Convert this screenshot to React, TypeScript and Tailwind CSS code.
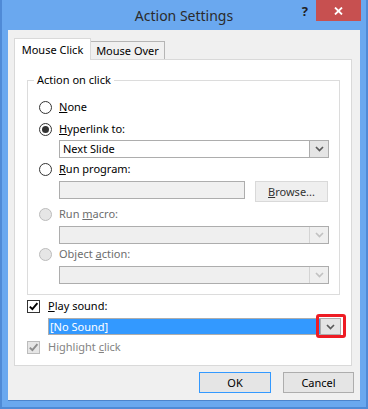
import React from 'react';

const Chevron = ({ color = '#5a5a5a' }: { color?: string }) => (
  <svg width="9" height="6" viewBox="0 0 9 6" fill="none">
    <path d="M1 1l3.5 3.5L8 1" stroke={color} strokeWidth="1.7" />
  </svg>
);

function Radio({ checked = false, disabled = false }: { checked?: boolean; disabled?: boolean }) {
  return (
    <div
      className={`w-[13px] h-[13px] rounded-full border flex items-center justify-center shrink-0 ${
        disabled ? 'border-[#bcbcbc] bg-[#e6e6e6]' : 'border-[#333333] bg-white'
      }`}
    >
      {checked && <div className="w-[7px] h-[7px] rounded-full bg-[#333333]" />}
    </div>
  );
}

function Checkbox({ disabled = false }: { disabled?: boolean }) {
  return (
    <div
      className={`w-[13px] h-[13px] border flex items-center justify-center shrink-0 ${
        disabled ? 'border-[#bcbcbc] bg-[#e6e6e6]' : 'border-[#333333] bg-white'
      }`}
    >
      <svg width="11" height="11" viewBox="0 0 11 11" fill="none">
        <path d="M1.8 5.6l2.6 2.6 5-6" stroke={disabled ? '#8d8d8d' : '#000'} strokeWidth="1.9" />
      </svg>
    </div>
  );
}

function Dropdown({ value = '', disabled = false }: { value?: string; disabled?: boolean }) {
  return (
    <div
      className={`ml-[31px] w-[270px] h-[18px] border border-[#adadad] flex ${
        disabled ? 'bg-[#efefef]' : 'bg-white'
      }`}
    >
      <div className="flex-1 pl-[3px] leading-[16px] text-black">{value}</div>
      <div
        className={`w-[19px] h-full border-l flex items-center justify-center ${
          disabled ? 'border-[#d4d4d4] bg-[#efefef]' : 'border-[#adadad] bg-[#e5e5e5]'
        }`}
      >
        <Chevron color={disabled ? '#c2c2c2' : '#5a5a5a'} />
      </div>
    </div>
  );
}

function OptionRow({
  label,
  checked,
  disabled,
  className = '',
}: {
  label: React.ReactNode;
  checked?: boolean;
  disabled?: boolean;
  className?: string;
}) {
  return (
    <div className={`h-[18px] pl-[11px] flex items-center gap-[7px] ${className}`}>
      <Radio checked={checked} disabled={disabled} />
      <span className={disabled ? 'text-[#6d6d6d]' : 'text-black'}>{label}</span>
    </div>
  );
}

export default function App() {
  return (
    <div
      className="w-[368px] h-[409px] bg-[#6aa8ef] flex flex-col shadow-[inset_2px_0_0_#4f8ad6,inset_-2px_0_0_#4f8ad6,inset_0_-2px_0_#4f8ad6] text-[11px] leading-[16px]"
      style={{ fontFamily: '"Noto Sans", "Segoe UI", sans-serif' }}
    >
      {/* Title bar */}
      <div className="h-[30px] grid grid-cols-[1fr_auto_1fr]">
        <div />
        <div className="text-[14px] text-[#2b2b2b] self-center leading-[20px] pt-[1px]">Action Settings</div>
        <div className="flex justify-end items-start">
          <span className="mt-[2px] mr-[8px] text-[13px] font-bold text-[#222] leading-[18px]">?</span>
          <div className="w-[45px] h-[21px] mr-[7px] bg-[#c75050] flex items-center justify-center">
            <svg width="9" height="8" viewBox="0 0 9 8" fill="none">
              <path d="M1 0.5l7 7M8 0.5l-7 7" stroke="#fff" strokeWidth="1.8" />
            </svg>
          </div>
        </div>
      </div>

      {/* Client area */}
      <div className="ml-[8px] w-[352px] h-[370px] bg-[#f0f0f0] px-[6px] pt-[8px] shadow-[0_1px_0_#4c84cc]">
        {/* Tabs */}
        <div className="flex items-end h-[21px] relative z-10">
          <div className="w-[77px] h-[22px] -mb-px bg-white border border-b-0 border-[#d9d9d9] flex items-center justify-center text-black">
            Mouse Click
          </div>
          <div className="w-[74px] h-[18px] bg-[#f0f0f0] border border-b-0 border-l-0 border-[#b5b5b5] flex items-center justify-center text-black">
            Mouse Over
          </div>
        </div>

        {/* Panel */}
        <div className="w-[338px] h-[307px] bg-white border border-[#d9d9d9] flex flex-col">
          {/* Group box */}
          <div className="relative mt-[20px] ml-[12px] w-[313px] h-[215px] border border-[#dcdcdc] flex flex-col">
            <span className="absolute -top-[9px] left-[6px] px-[3px] bg-white text-black">Action on click</span>

            <OptionRow className="mt-[17px]" label={<><u>N</u>one</>} />
            <OptionRow className="mt-[4px]" checked label={<><u>H</u>yperlink to:</>} />
            <div className="mt-[2px]">
              <Dropdown value="Next Slide" />
            </div>
            <OptionRow className="mt-[2px]" label={<><u>R</u>un program:</>} />
            <div className="mt-[3px] ml-[31px] flex items-start">
              <div className="w-[186px] h-[18px] bg-[#f0f0f0] border border-[#adadad]" />
              <div className="ml-[10px] w-[73px] h-[21px] bg-[#efefef] border border-[#d9d9d9] flex items-center justify-center text-[#333]">
                <span>
                  <u>B</u>rowse...
                </span>
              </div>
            </div>
            <OptionRow className="mt-[3px]" disabled label={<>Run <u>m</u>acro:</>} />
            <div className="mt-[3px]">
              <Dropdown disabled />
            </div>
            <OptionRow className="mt-[1px]" disabled label={<>Object <u>a</u>ction:</>} />
            <div className="mt-[3px]">
              <Dropdown disabled />
            </div>
          </div>

          {/* Play sound */}
          <div className="mt-[2px] ml-[12px] h-[18px] flex items-center gap-[8px]">
            <Checkbox />
            <span className="text-black">
              <u>P</u>lay sound:
            </span>
          </div>
          <div className="relative mt-[3px] ml-[33px] w-[293px] h-[17px] border border-[#adadad] flex">
            <div className="flex-1 bg-[#3399ff] text-white pl-[1px] leading-[15px]">[No Sound]</div>
            <div className="w-[20px] h-full bg-[#e5e5e5] border-l border-[#adadad] flex items-center justify-center">
              <Chevron />
            </div>
            <div className="absolute left-[267px] -top-[5px] w-[30px] h-[24px] border-[3px] border-[#ee1c24] rounded-[3px]" />
          </div>

          {/* Highlight click */}
          <div className="mt-[3px] ml-[12px] h-[18px] flex items-center gap-[8px]">
            <Checkbox disabled />
            <span className="text-[#838383]">
              Highlight <u>c</u>lick
            </span>
          </div>
        </div>

        {/* Buttons */}
        <div className="mt-[6px] flex justify-end gap-[12px]">
          <div className="w-[72px] h-[21px] bg-[#e5e5e5] border border-[#3399ff] flex items-center justify-center text-black">
            OK
          </div>
          <div className="w-[71px] h-[21px] bg-[#e5e5e5] border border-[#adadad] flex items-center justify-center text-black">
            Cancel
          </div>
        </div>
      </div>
    </div>
  );
}
